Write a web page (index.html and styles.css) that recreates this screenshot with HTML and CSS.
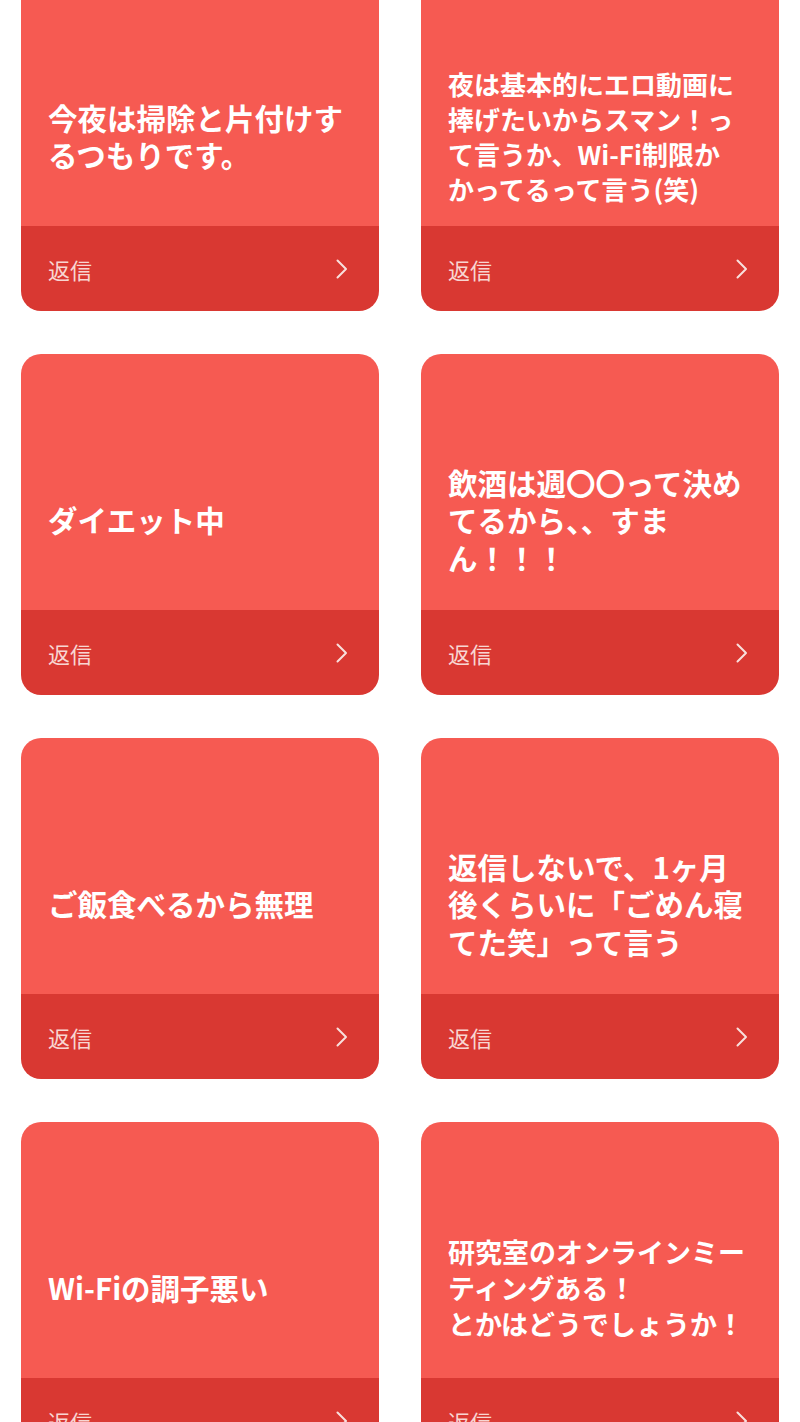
FILE: index.html
```html
<!DOCTYPE html>
<html lang="ja">
<head>
<meta charset="utf-8">
<link rel="stylesheet" href="styles.css">
</head>
<body>
<div class="grid">
  <div class="card"><div class="body"><p class="msg">今夜は掃除と片付けす<br>るつもりです。</p></div><div class="foot"><span>返信</span><svg class="chev" viewBox="0 0 12 20"><path d="M1.5 1.5 L10 10 L1.5 18.5"/></svg></div></div>
  <div class="card"><div class="body"><p class="msg msg-sm">夜は基本的にエロ動画に<br>捧げたいからスマン！っ<br>て言うか、Wi-Fi制限か<br>かってるって言う(笑)</p></div><div class="foot"><span>返信</span><svg class="chev" viewBox="0 0 12 20"><path d="M1.5 1.5 L10 10 L1.5 18.5"/></svg></div></div>
  <div class="card"><div class="body"><p class="msg">ダイエット中</p></div><div class="foot"><span>返信</span><svg class="chev" viewBox="0 0 12 20"><path d="M1.5 1.5 L10 10 L1.5 18.5"/></svg></div></div>
  <div class="card"><div class="body"><p class="msg">飲酒は週〇〇って決め<br>てるから、、すま<br>ん！！！</p></div><div class="foot"><span>返信</span><svg class="chev" viewBox="0 0 12 20"><path d="M1.5 1.5 L10 10 L1.5 18.5"/></svg></div></div>
  <div class="card"><div class="body"><p class="msg">ご飯食べるから無理</p></div><div class="foot"><span>返信</span><svg class="chev" viewBox="0 0 12 20"><path d="M1.5 1.5 L10 10 L1.5 18.5"/></svg></div></div>
  <div class="card"><div class="body"><p class="msg">返信しないで、1ヶ月<br>後くらいに「ごめん寝<br>てた笑」って言う</p></div><div class="foot"><span>返信</span><svg class="chev" viewBox="0 0 12 20"><path d="M1.5 1.5 L10 10 L1.5 18.5"/></svg></div></div>
  <div class="card"><div class="body"><p class="msg">Wi-Fiの調子悪い</p></div><div class="foot"><span>返信</span><svg class="chev" viewBox="0 0 12 20"><path d="M1.5 1.5 L10 10 L1.5 18.5"/></svg></div></div>
  <div class="card"><div class="body"><p class="msg msg-md">研究室のオンラインミー<br>ティングある！<br>とかはどうでしょうか！</p></div><div class="foot"><span>返信</span><svg class="chev" viewBox="0 0 12 20"><path d="M1.5 1.5 L10 10 L1.5 18.5"/></svg></div></div>
</div>
</body>
</html>
```
FILE: styles.css
```css
html, body {
  margin: 0;
  padding: 0;
  background: #ffffff;
  overflow: hidden;
}
body {
  font-family: "Noto Sans CJK JP", "Noto Sans", sans-serif;
  height: 1422px;
}
.grid {
  display: grid;
  grid-template-columns: 358px 358px;
  column-gap: 42px;
  row-gap: 43px;
  padding: 0 21px;
  margin-top: -30px;
}
.card {
  border-radius: 20px;
  overflow: hidden;
  display: flex;
  flex-direction: column;
  height: 341px;
}
.body {
  background: #f65a52;
  height: 256px;
  box-sizing: border-box;
  padding: 76px 20px 0 27px;
  display: flex;
  align-items: center;
}
.msg {
  margin: 0;
  color: #ffffff;
  font-size: 29.5px;
  font-weight: 700;
  line-height: 37.5px;
  white-space: nowrap;
}
.msg-sm {
  font-size: 26px;
  line-height: 35px;
}
.msg-md {
  font-size: 27px;
  line-height: 36px;
}
.foot {
  background: #d93832;
  height: 85px;
  display: flex;
  align-items: center;
  justify-content: space-between;
  padding: 0 31px 0 27px;
}
.foot span {
  color: #f8d6d2;
  font-size: 22px;
  font-weight: 400;
  line-height: 1;
}
.chev {
  width: 12px;
  height: 20px;
  fill: none;
  stroke: #f8e0dd;
  stroke-width: 2;
  stroke-linecap: round;
  stroke-linejoin: round;
}
```
